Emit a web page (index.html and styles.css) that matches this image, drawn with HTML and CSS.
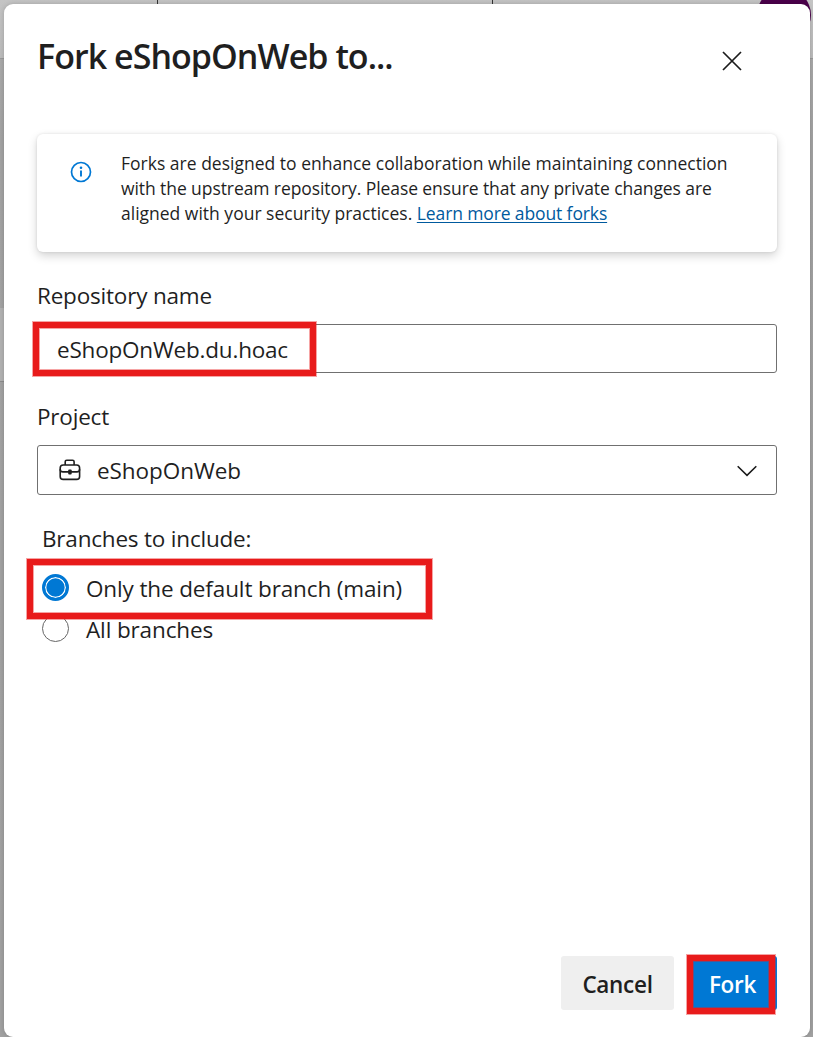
FILE: index.html
```html
<!DOCTYPE html>
<html lang="en">
<head>
<meta charset="utf-8">
<title>Fork eShopOnWeb</title>
<link rel="stylesheet" href="styles.css">
</head>
<body>
<div class="backdrop">
  <span class="tab-line tab-line-a"></span>
  <span class="tab-line tab-line-b"></span>
  <span class="avatar"></span>
  <span class="rule"></span>
  <span class="band"></span>
</div>
<main class="dialog">
  <header class="header">
    <h1 class="title"><span class="t-title">Fork eShopOnWeb to...</span></h1>
    <button class="close" aria-label="Close"><svg width="20" height="20" viewBox="0 0 20 20"><path d="M1 1 19 19M19 1 1 19" fill="none" stroke="#1b1b1b" stroke-width="1.7"/></svg></button>
  </header>
  <section class="info">
    <svg class="info-icon" width="22" height="22" viewBox="0 0 22 22"><circle cx="11" cy="11" r="9.5" fill="none" stroke="#0078d4" stroke-width="1.7"/><circle cx="11" cy="6.8" r="1.3" fill="#0078d4"/><path d="M11 9.6V15.6" stroke="#0078d4" stroke-width="1.9"/></svg>
    <p class="info-text">
      <span class="line line-1">Forks are designed to enhance collaboration while maintaining connection</span>
      <span class="line line-2">with the upstream repository. Please ensure that any private changes are</span>
      <span class="line line-3">aligned with your security practices. <a class="link" href="#">Learn more about forks</a></span>
    </p>
  </section>
  <label class="label"><span class="t-repo">Repository name</span></label>
  <div class="field"><span class="t-name">eShopOnWeb.du.hoac</span><span class="mark mark-name"></span></div>
  <label class="label"><span class="t-project">Project</span></label>
  <div class="field select">
    <svg class="case" width="22" height="22" viewBox="0 0 22 22"><g fill="none" stroke="#1f1f1f" stroke-width="1.6"><path d="M6.2 6V2.8Q6.2 1.3 7.7 1.3H13.6Q15.1 1.3 15.1 2.8V6"/><rect x="1.2" y="6" width="19.4" height="14.4" rx="3"/><path d="M1.2 10.2Q1.2 12.9 4 12.9H17.8Q20.6 12.9 20.6 10.2"/></g><rect x="9.2" y="10.4" width="3.5" height="5" rx="1" fill="#1f1f1f"/></svg>
    <span class="t-web">eShopOnWeb</span>
    <svg class="chevron" width="20" height="12" viewBox="0 0 20 12"><path d="M.7 1.2 10 10.3 19.3 1.2" fill="none" stroke="#1b1b1b" stroke-width="1.6"/></svg>
  </div>
  <fieldset class="branches">
    <div class="label"><span class="t-branches">Branches to include:</span></div>
    <div class="option"><span class="radio radio-on"></span><span class="t-only">Only the default branch (main)</span><span class="mark mark-option"></span></div>
    <div class="option"><span class="radio"></span><span class="t-all">All branches</span></div>
  </fieldset>
  <footer class="footer">
    <button class="button cancel"><span class="t-cancel">Cancel</span></button>
    <button class="button primary"><span class="t-fork">Fork</span><span class="mark mark-fork"></span></button>
  </footer>
</main>
</body>
</html>
```
FILE: styles.css
```css
* { box-sizing: border-box; }
body {
  margin: 0;
  height: 1037px;
  overflow: hidden;
  position: relative;
  padding: 4px 3px 0 4px;
  font-family: "Open Sans", "Noto Sans", sans-serif;
  color: #1f1f1f;
  background: linear-gradient(#c4c4c4 0, #bcbcbc 58px, #a9a9a9 59px, #a3a3a3 140px, #a1a1a1 100%);
}
span { white-space: nowrap; }
.backdrop { position: absolute; inset: 0; }
.backdrop span { position: absolute; }
.tab-line { top: 0; width: 1px; height: 8px; background: #333; }
.tab-line-a { left: 157px; }
.tab-line-b { left: 492px; }
.avatar { left: 757px; top: -12px; width: 54px; height: 54px; border-radius: 50%; background: #4b004b; }
.rule { left: 0; top: 58px; width: 100%; height: 1px; background: #999; }
.band { left: 0; top: 308px; width: 6px; height: 74px; background: #b2b2b2; border-bottom: 1px solid #8c8c8c; }
.dialog {
  position: relative;
  display: flex;
  flex-direction: column;
  height: 1033px;
  padding: 28px 33px 27px;
  background: #fff;
  border-radius: 9px;
  box-shadow: 0 0 5px rgba(0, 0, 0, .18);
}
.header { display: flex; justify-content: space-between; height: 48px; }
.title { margin: 0; font-size: 34px; line-height: 48px; font-weight: 600; letter-spacing: -.96px; }
button { border: 0; padding: 0; font: inherit; color: inherit; }
.close { width: 20px; height: 20px; margin: 19px 35px 0 0; background: none; line-height: 0; }
.info {
  display: flex;
  height: 118px;
  margin-top: 54px;
  padding: 17px 0 0 33px;
  border-radius: 6px;
  box-shadow: 0 4px 10px rgba(0, 0, 0, .17), 0 0 3px rgba(0, 0, 0, .1);
}
.info-icon { margin-top: 10px; flex: none; }
.info-text { margin: 0 0 0 29px; font-size: 17.5px; line-height: 25px; }
.line-1 { letter-spacing: .01px; }
.line-2 { letter-spacing: -.08px; }
.line { display: block; }
.link { color: #005a9e; letter-spacing: -.12px; text-decoration: underline; text-decoration-thickness: 1px; text-underline-offset: 2px; }
.label { height: 32px; margin: 28px 0 12px; font-size: 22.5px; line-height: 32px; letter-spacing: -.2px; }
.field {
  position: relative;
  display: flex;
  align-items: center;
  height: 49px;
  padding: 2px 19px 0;
  border: 1px solid #707070;
  border-radius: 3px;
  font-size: 22.5px;
  line-height: 32px;
  letter-spacing: -.2px;
}
.select { height: 50px; padding-top: 1px; letter-spacing: -.05px; }
.case { margin: 0 16px 0 2px; transform: translateY(-1px); }
.chevron { margin-left: auto; }
.branches { margin: 0; padding: 0 0 0 5px; border: 0; font-size: 22.5px; letter-spacing: -.13px; }
.option { position: relative; display: flex; align-items: center; height: 41px; gap: 17px; }
.t-only, .t-all { padding-top: 2px; }
.radio { width: 27px; height: 27px; border: 1px solid #666; border-radius: 50%; background: #fff; flex: none; }
.radio-on { border: 3px solid #0078d4; background: #0078d4; box-shadow: inset 0 0 0 1.3px #fff; }
.footer { display: flex; justify-content: flex-end; gap: 16px; margin-top: auto; }
.button { position: relative; height: 54px; padding-top: 2px; font-size: 22.5px; font-weight: 600; border-radius: 3px; letter-spacing: -.3px; }
.cancel { width: 113px; background: #efefef; }
.primary { width: 87px; padding-right: 2px; background: #0078d4; color: #fff; }
.mark {
  position: absolute;
  border: 6px solid #e81b1b;
  box-shadow: 0 0 0 1px rgba(232, 27, 27, .4), inset 0 0 0 1px rgba(232, 27, 27, .4);
}
.mark-name { left: -5px; top: -3px; width: 283px; height: 54px; }
.mark-option { left: -15px; top: -8px; width: 405px; height: 60px; z-index: 1; }
.mark-fork { left: -3px; top: -1px; width: 88px; height: 59px; }
```
